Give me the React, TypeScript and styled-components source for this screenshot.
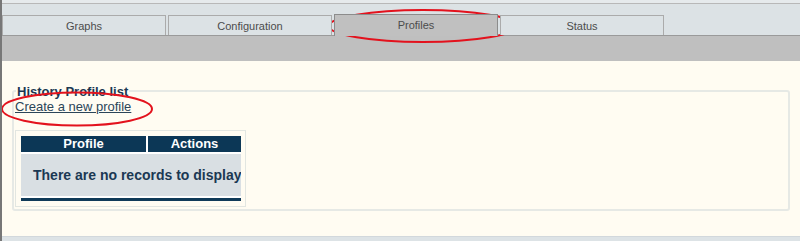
import React from "react";
import styled, { createGlobalStyle } from "styled-components";

const Global = createGlobalStyle`
  html, body {
    margin: 0;
    padding: 0;
    background: #fffcf2;
  }
  * {
    box-sizing: border-box;
  }
`;

const Page = styled.div`
  position: relative;
  width: 800px;
  height: 241px;
  display: flex;
  flex-direction: column;
  border-left: 2px solid #777;
  font-family: "Liberation Sans", Arial, sans-serif;
  overflow: hidden;
`;

const TopStrip = styled.div`
  height: 4px;
  background: #e6eaec;
  border-bottom: 1px solid #b8b8b8;
`;

const TabBar = styled.div`
  height: 31px;
  display: flex;
  align-items: flex-end;
  gap: 2px;
  background: #dce2e5;
`;

const Tab = styled.div<{ $active?: boolean }>`
  width: 164px;
  height: ${(p) => (p.$active ? "22px" : "20px")};
  margin-bottom: ${(p) => (p.$active ? "-1px" : "0")};
  position: relative;
  z-index: 1;
  display: flex;
  align-items: center;
  justify-content: center;
  padding-top: ${(p) => (p.$active ? "0" : "1px")};
  padding-bottom: ${(p) => (p.$active ? "2px" : "0")};
  background: ${(p) => (p.$active ? "#c0c0c0" : "#dce2e5")};
  border: 1px solid ${(p) => (p.$active ? "#8c8c8c" : "#ababab")};
  border-bottom: none;
  font-size: 11px;
  color: #4c4c4c;
`;

const SubBar = styled.div`
  height: 26px;
  background: #bfbfbf;
  border-top: 1px solid #9a9a9a;
`;

const Content = styled.div`
  flex: 1;
  background: #fffcf2;
  padding: 29px 10px 0 10px;
`;

const Box = styled.div`
  border: 2px solid #e6e9e5;
  border-radius: 3px;
  padding: 0 0 2px 0;
`;

const Legend = styled.div`
  width: fit-content;
  margin: -7px 0 0 2px;
  padding: 0 1px;
  background: #fffcf2;
  font-size: 13px;
  line-height: 14px;
  font-weight: bold;
  color: #1b3853;
`;

const CreateLink = styled.a`
  display: block;
  width: fit-content;
  margin-left: 1px;
  font-size: 13px;
  line-height: 16px;
  color: #2b4559;
  text-decoration: underline;
  cursor: pointer;
`;

const TableBox = styled.div`
  width: fit-content;
  margin: 15px 0 0 1px;
  padding: 5px 4px 5px 5px;
  border: 1px solid #e2e6e1;
`;

const Table = styled.div`
  width: 220px;
  display: flex;
  flex-direction: column;
  gap: 2px;
  background: #ffffff;
`;

const HeadRow = styled.div`
  display: grid;
  grid-template-columns: 125px 1fr;
  gap: 2px;
  height: 16px;
`;

const HeadCell = styled.div`
  background: #0c3756;
  color: #ffffff;
  font-size: 13px;
  font-weight: bold;
  line-height: 16px;
  text-align: center;
`;

const EmptyRow = styled.div`
  height: 42px;
  display: flex;
  align-items: center;
  padding-left: 12px;
  background: #d9dfe3;
  color: #1b3853;
  font-size: 14px;
  font-weight: bold;
  white-space: nowrap;
  overflow: hidden;
`;

const FootBar = styled.div`
  height: 3px;
  background: #0f3a58;
`;

const BottomBand = styled.div`
  height: 5px;
  background: #dde3e6;
  border-top: 1px solid #d2d8dc;
`;

const Marks = styled.svg`
  position: absolute;
  left: -2px;
  top: 0;
  pointer-events: none;
`;

const tabs = ["Graphs", "Configuration", "Profiles", "Status"];

export default function App() {
  return (
    <>
      <Global />
      <Page>
        <TopStrip />
        <TabBar>
          {tabs.map((t) => (
            <Tab key={t} $active={t === "Profiles"}>
              {t}
            </Tab>
          ))}
        </TabBar>
        <SubBar />
        <Content>
          <Box>
            <Legend>History Profile list</Legend>
            <CreateLink>Create a new profile</CreateLink>
            <TableBox>
              <Table>
                <HeadRow>
                  <HeadCell>Profile</HeadCell>
                  <HeadCell>Actions</HeadCell>
                </HeadRow>
                <EmptyRow>There are no records to display</EmptyRow>
                <FootBar />
              </Table>
            </TableBox>
          </Box>
        </Content>
        <BottomBand />
        <Marks width="800" height="241" viewBox="0 0 800 241">
          <ellipse cx="423" cy="26" rx="94" ry="16" fill="none" stroke="#e3121d" strokeWidth="2" />
          <ellipse cx="77" cy="109" rx="75" ry="16.5" fill="none" stroke="#e3121d" strokeWidth="2" />
        </Marks>
      </Page>
    </>
  );
}
